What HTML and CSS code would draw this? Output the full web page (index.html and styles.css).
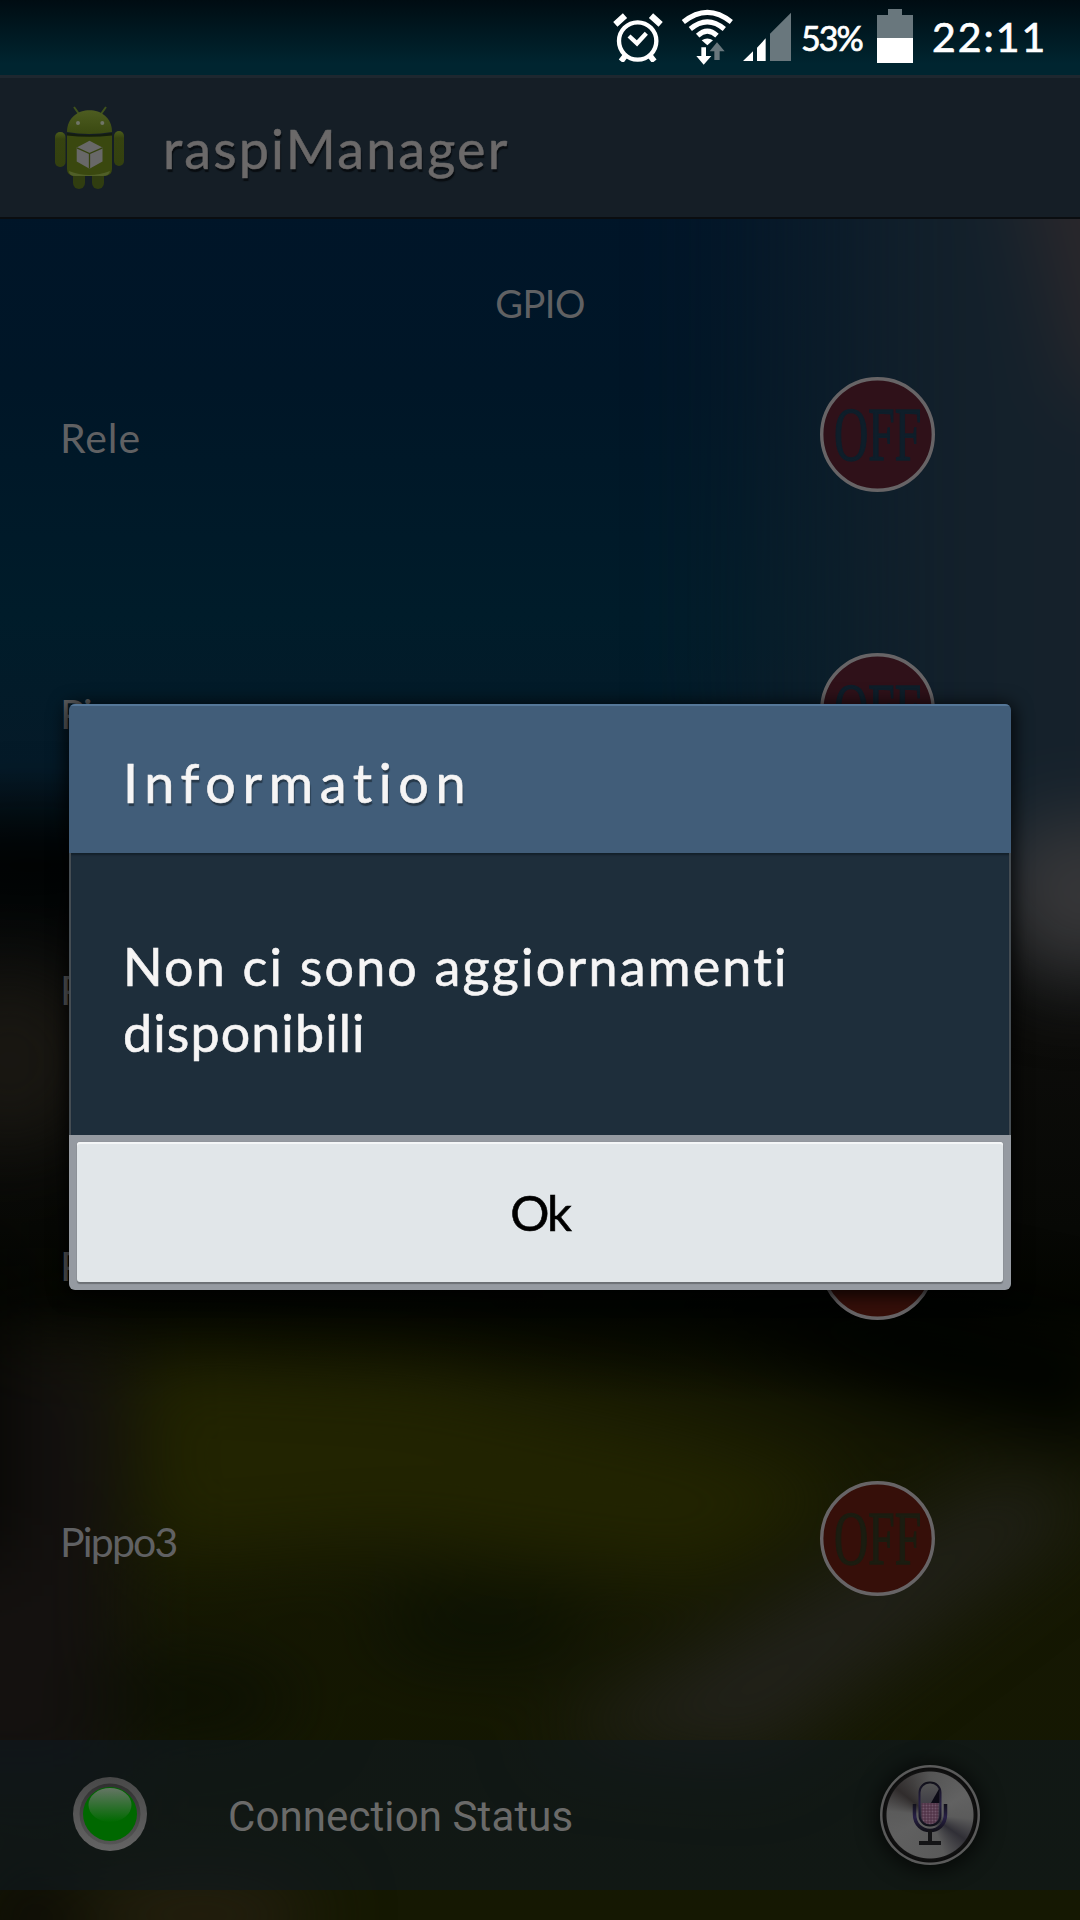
FILE: index.html
```html
<!DOCTYPE html>
<html lang="it">
<head>
<meta charset="utf-8">
<title>raspiManager</title>
<link rel="stylesheet" href="styles.css">
</head>
<body>
<div class="screen">
  <svg class="wallpaper" viewBox="0 0 1080 1920" aria-hidden="true">
    <defs>
      <linearGradient id="sky" x1="0" y1="0" x2="0" y2="1">
        <stop offset="0" stop-color="#00142a"/><stop offset=".2" stop-color="#001627"/>
        <stop offset=".32" stop-color="#001c2a"/><stop offset=".4" stop-color="#051a28"/>
        <stop offset=".45" stop-color="#030708"/><stop offset=".54" stop-color="#0c0c0a"/>
        <stop offset=".64" stop-color="#070805"/><stop offset=".68" stop-color="#030500"/>
        <stop offset=".73" stop-color="#151703"/><stop offset="1" stop-color="#151802"/>
      </linearGradient>
      <linearGradient id="haze" x1="0" y1="0" x2="1" y2="0">
        <stop offset="0" stop-color="#12202b" stop-opacity="0"/><stop offset=".5" stop-color="#12202b"/><stop offset="1" stop-color="#18222b"/>
      </linearGradient>
      <filter id="soft" x="-50%" y="-50%" width="200%" height="200%" color-interpolation-filters="sRGB"><feGaussianBlur stdDeviation="38"/></filter>
    </defs>
    <rect width="1080" height="1920" fill="url(#sky)"/>
    <g filter="url(#soft)">
      <path d="M680 100H1180V900H860L680 700Z" fill="url(#haze)"/>
      <path d="M1000 100H1200V380L1080 400Z" fill="#2a272b"/>
      <ellipse cx="1080" cy="900" rx="90" ry="85" fill="#363638"/>
      <ellipse cx="10" cy="1060" rx="90" ry="90" fill="#191712"/>
      <ellipse cx="30" cy="865" rx="130" ry="35" fill="#000202"/>
      <path d="M140 1360L420 1375L700 1435L860 1490L700 1580L400 1540L150 1560Z" fill="#222401"/>
      <path d="M-100 1340H120V1800H-100Z" fill="#14110f"/>
      <path d="M-60 1250H10V1560H-60Z" fill="#040502"/>
      <path d="M200 1275L400 1290L700 1325L900 1400L1120 1450V1340L900 1290Z" fill="#000200"/>
      <path d="M540 1740L1000 1480L1100 1500L760 1760Z" fill="#21211a"/>
      <ellipse cx="480" cy="1625" rx="110" ry="32" fill="#0a1003"/>
      <ellipse cx="190" cy="1700" rx="110" ry="32" fill="#0a0e04"/>
      <ellipse cx="200" cy="1915" rx="120" ry="30" fill="#2a2116"/>
      <ellipse cx="30" cy="1920" rx="50" ry="60" fill="#0d0b08"/>
    </g>
  </svg>

  <header class="status">
    <svg class="alarm" width="50" height="50" viewBox="0 0 150 150" fill="none" stroke="#fff">
      <circle cx="74" cy="87" r="56" stroke-width="13"/>
      <path d="M48 72L72 94L100 64" stroke-width="13"/>
      <path d="M7 37L36 11M143 37L114 11" stroke-width="19"/>
      <path d="M38 130L24 148M110 130L124 148" stroke-width="17"/>
    </svg>
    <svg class="wifi" width="52" height="54" viewBox="0 0 156 162" fill="none" stroke="#fff" stroke-width="15">
      <path d="M7 36Q79-22 151 36M28 57Q79 14 130 57M50 77Q79 50 108 77"/>
      <path d="M62 91Q79 80 96 91L79 106Z" fill="#fff" stroke="none"/>
      <path d="M61 112H75V138H91L68 164L46 138H61Z" fill="#fff" stroke="none"/>
      <path d="M100 150V124H86L108 97L131 124H116V150Z" fill="#69777d" stroke="none"/>
    </svg>
    <svg class="signal" width="48" height="49" viewBox="0 0 144 147">
      <path d="M0 147L30 118V147ZM42 147V107L68 79V147Z" fill="#fff"/>
      <path d="M81 147V65L144 2V147Z" fill="#69777d"/>
    </svg>
    <span class="percent">53%</span>
    <svg class="battery" width="36" height="54" viewBox="0 0 36 54">
      <path d="M11 0H25V6H36V29H0V6H11Z" fill="#69777d"/><path d="M0 29H36V54H0Z" fill="#fff"/>
    </svg>
    <span class="clock">22:11</span>
  </header>

  <div class="appbar">
    <svg class="robot" width="70" height="84" viewBox="54 105 70 84">
      <defs>
        <linearGradient id="green" x1="0" y1="0" x2="0" y2="1"><stop offset="0" stop-color="#4d5c20"/><stop offset="1" stop-color="#3a4911"/></linearGradient>
        <linearGradient id="limb" x1="0" y1="0" x2="0" y2="1"><stop offset="0" stop-color="#4b5c1b"/><stop offset=".2" stop-color="#364310"/><stop offset="1" stop-color="#33400f"/></linearGradient>
      </defs>
      <path d="M74 106L79 113M106 106L101 113" stroke="#3f521b" stroke-width="2"/>
      <rect x="73" y="164" width="12" height="24" rx="6" fill="#303d10"/>
      <rect x="92" y="164" width="12" height="24" rx="6" fill="#303d10"/>
      <rect x="55" y="131" width="10.5" height="35" rx="5" fill="url(#limb)"/>
      <rect x="114" y="130" width="10" height="35" rx="5" fill="url(#limb)"/>
      <path d="M67 131C67 102 112 102 112 131Q89 135 67 131Z" fill="url(#green)"/>
      <path d="M67 132Q89 136 112 132V135Q89 137 67 135Z" fill="#141d0d"/>
      <path d="M67 134.500Q89 137 112 134.500V168Q112 175 104 175H75Q67 175 67 168Z" fill="#3a480f"/>
      <path d="M69 170Q89 178 110 170Q109 175 103 175H75Q69 175 69 170Z" fill="#505f28"/>
      <circle cx="78" cy="122" r="2" fill="#707568"/><circle cx="102.300" cy="122" r="2" fill="#707568"/>
      <path d="M89.500 139.700L102.500 146.500V160.500L89.500 167.700L76.700 160.500V146.500Z" fill="#686868"/>
      <path d="M77 146.800L89.500 152.500L102.500 146.800M89.500 152.500V167.500" fill="none" stroke="#35420f" stroke-width="1.300"/>
    </svg>
    <h1 class="app-title">raspiManager</h1>
  </div>

  <main class="content">
    <h2 class="section">GPIO</h2>
    <ul class="pins">
      <li class="pin"><span class="rele">Rele</span>
        <svg class="toggle" viewBox="0 0 115 115"><circle class="disc" cx="57.500" cy="57.500" r="55.800"/><text transform="translate(14 83) scale(.625 1)">OFF</text></svg></li>
      <li class="pin"><span>Pippo</span>
        <svg class="toggle" viewBox="0 0 115 115"><circle class="disc" cx="57.500" cy="57.500" r="55.800"/><text transform="translate(14 83) scale(.625 1)">OFF</text></svg></li>
      <li class="pin warm"><span>Pippo1</span>
        <svg class="toggle" viewBox="0 0 115 115"><circle class="disc" cx="57.500" cy="57.500" r="55.800"/><text transform="translate(14 83) scale(.625 1)">OFF</text></svg></li>
      <li class="pin warm"><span>Pippo2</span>
        <svg class="toggle" viewBox="0 0 115 115"><circle class="disc" cx="57.500" cy="57.500" r="55.800"/><text transform="translate(14 83) scale(.625 1)">OFF</text></svg></li>
      <li class="pin warm"><span>Pippo3</span>
        <svg class="toggle" viewBox="0 0 115 115"><circle class="disc" cx="57.500" cy="57.500" r="55.800"/><text transform="translate(14 83) scale(.625 1)">OFF</text></svg></li>
    </ul>
  </main>

  <footer class="connection">
    <svg class="led" width="76" height="76" viewBox="0 0 76 76">
      <defs>
        <linearGradient id="rim" x1="0" y1="0" x2="0" y2="1"><stop offset="0" stop-color="#484848"/><stop offset="1" stop-color="#646464"/></linearGradient>
        <linearGradient id="rim2" x1="0" y1="0" x2="0" y2="1"><stop offset="0" stop-color="#303030"/><stop offset="1" stop-color="#555"/></linearGradient>
        <linearGradient id="shine" x1="0" y1="0" x2="0" y2="1"><stop offset="0" stop-color="#657565"/><stop offset="1" stop-color="#006a00"/></linearGradient>
      </defs>
      <circle cx="38" cy="37" r="37" fill="url(#rim)"/><circle cx="38" cy="37" r="30.500" fill="url(#rim2)"/>
      <circle cx="38" cy="37" r="27" fill="#006800"/><ellipse cx="38" cy="28" rx="21.500" ry="17" fill="url(#shine)"/>
    </svg>
    <span class="connection-label">Connection Status</span>
    <div class="mic">
      <svg width="100" height="100" viewBox="0 0 100 100">
        <defs>
          <linearGradient id="violet" x1="0" y1="0" x2="0" y2="1"><stop offset="0" stop-color="#11101a"/><stop offset=".5" stop-color="#282047"/><stop offset="1" stop-color="#121119"/></linearGradient>
          <linearGradient id="glass" x1="0" y1="0" x2="0" y2="1"><stop offset="0" stop-color="#555"/><stop offset="1" stop-color="#292735"/></linearGradient>
          <pattern id="mesh" width="3" height="3" patternUnits="userSpaceOnUse"><rect width="3" height="3" fill="#523549"/><circle cx="1.500" cy="1.500" r="1" fill="#71566a"/></pattern>
        </defs>
        <path d="M34.500 39V49C34.500 71 65.500 71 65.500 49V39" fill="none" stroke="url(#violet)" stroke-width="3.500"/>
        <path d="M50 65V77M39 78H61" stroke="#141416" stroke-width="4"/>
        <rect x="39.500" y="17.500" width="21" height="43" rx="10" fill="url(#glass)" stroke="url(#violet)" stroke-width="2"/>
        <path d="M59.500 23V38H51Z" fill="#0c0b16"/>
        <path d="M41.500 38H58.500V51C58.500 62 41.500 62 41.500 51Z" fill="url(#mesh)"/>
      </svg>
    </div>
  </footer>

  <section class="dialog" role="dialog">
    <h2 class="dialog-title">Information</h2>
    <div class="dialog-body"><p class="line1">Non ci sono aggiornamenti</p><p class="line2">disponibili</p></div>
    <div class="dialog-actions"><button class="ok">Ok</button></div>
  </section>
</div>
</body>
</html>
```
FILE: styles.css
```css
* { box-sizing: border-box; }
body, h1, h2, p, ul { margin: 0; padding: 0; font-weight: 400; }
body { background: #000; font-family: Lato, "Open Sans", sans-serif; }

.screen {
  position: relative;
  display: flex;
  flex-direction: column;
  width: 1080px;
  height: 1920px;
  overflow: hidden;
}
.wallpaper { position: absolute; inset: 0; z-index: -1; }

.status {
  display: flex;
  align-items: flex-start;
  height: 75px;
  padding: 9px 0 0 613px;
  background: linear-gradient(#000c12, #002530 85%);
  color: #fff;
  -webkit-text-stroke: .7px #fff;
}
.status svg { flex: none; }
.alarm { margin-top: 3px; }
.wifi { margin: 1px 0 0 18px; overflow: visible; }
.signal { margin: 3px 0 0 10px; }
.percent { width: 66px; margin: 10px 0 0 10px; font-size: 34px; line-height: 38px; letter-spacing: -2px; }
.battery { margin-left: 10px; }
.clock { margin: 0 0 0 19px; font-size: 41px; line-height: 56px; letter-spacing: 2px; white-space: nowrap; }

.appbar {
  display: flex;
  align-items: center;
  height: 144px;
  padding: 0 54px;
  background: #151e26;
  border-top: 3px solid #1e272f;
  border-bottom: 2px solid #0a0d10;
}
.app-title {
  margin: 2px 0 0 39px;
  font-size: 54px;
  line-height: 66px;
  letter-spacing: 2.1px;
  color: #6b6969;
  text-shadow: 1px 3px 1px #090d11;
  -webkit-text-stroke: .5px #6b6969;
}

.content { flex: 1; color: #606163; }
.section { padding-top: 61px; font-size: 38px; line-height: 46px; letter-spacing: -.5px; text-align: center; }
.pins { margin-top: -30px; list-style: none; }
.pin {
  display: flex;
  align-items: center;
  justify-content: space-between;
  height: 276px;
  padding: 0 145px 0 60px;
  font-size: 41px;
  letter-spacing: -1.8px;
}
.pin span { padding-top: 6px; }
.pin .rele { letter-spacing: .9px; }
.toggle {
  width: 115px;
  height: 115px;
  fill: #0e1e2a;
  font-family: "Liberation Serif", serif;
  font-size: 76px;
  letter-spacing: 0;
}
.toggle text { stroke: #0e1e2a; stroke-width: 1.5px; }
.disc { fill: #2f1119; stroke: #676466; stroke-width: 3.4; }
.warm .disc { fill: #360f09; }
.warm .toggle { fill: #1b1c10; }
.warm .toggle text { stroke: #1b1c10; }

.connection {
  display: flex;
  align-items: center;
  height: 150px;
  margin-bottom: 30px;
  padding: 0 100px 0 72px;
  background: rgba(15, 24, 31, .66);
  font-family: Roboto, sans-serif;
}
.connection-label { flex: 1; margin: 3px 0 0 80px; font-size: 42px; letter-spacing: .1px; color: #6a6a69; }
.mic {
  width: 100px;
  height: 100px;
  border-radius: 50%;
  background:
    radial-gradient(circle, transparent 43px, #111 44px, #0c0c0c 47px, #5a5a5a 48px),
    conic-gradient(from 0deg, #555, #626262 60deg, #5b5b5b 95deg, #302f36 125deg, #5a5a5a 160deg, #606060 240deg, #5b5b5b 275deg, #302c2c 308deg, #555);
  box-shadow: 0 2px 20px 4px rgba(0, 0, 0, .65);
}

.dialog {
  position: absolute;
  top: 704px;
  left: 69px;
  width: 942px;
  height: 586px;
  display: flex;
  flex-direction: column;
  border-radius: 6px;
  overflow: hidden;
  color: #f6f5f5;
  box-shadow: 0 3px 18px 3px rgba(0, 0, 0, .8);
  -webkit-text-stroke: .6px;
}
.dialog-title {
  height: 149px;
  padding: 41px 54px 0;
  border-top: 2px solid #557798;
  background: #415d79;
  font-size: 54px;
  line-height: 72px;
  letter-spacing: 6.6px;
  text-shadow: 1px 3px 1px #263849;
}
.dialog-body {
  flex: 1;
  padding: 80px 52px 0;
  border: solid #454d53;
  border-width: 0 2px;
  background: #1e2e3b;
  box-shadow: inset 0 3px 2px -1px #14202a;
  font-size: 52px;
  line-height: 66px;
  white-space: nowrap;
}
.line1 { letter-spacing: 2.2px; }
.line2 { letter-spacing: 1.1px; }
.dialog-actions { height: 155px; padding: 7px 8px 8px; background: #959aa1; }
.ok {
  display: block;
  width: 100%;
  height: 140px;
  padding: 0;
  border: 0;
  border-radius: 3px;
  background: #e1e6e9;
  box-shadow: inset 0 2px #f4f6f7, 0 2px 1px #6c7075, 0 0 1px #777;
  color: #000;
  font: 49px Lato, sans-serif;
  letter-spacing: -2px;
}
```
